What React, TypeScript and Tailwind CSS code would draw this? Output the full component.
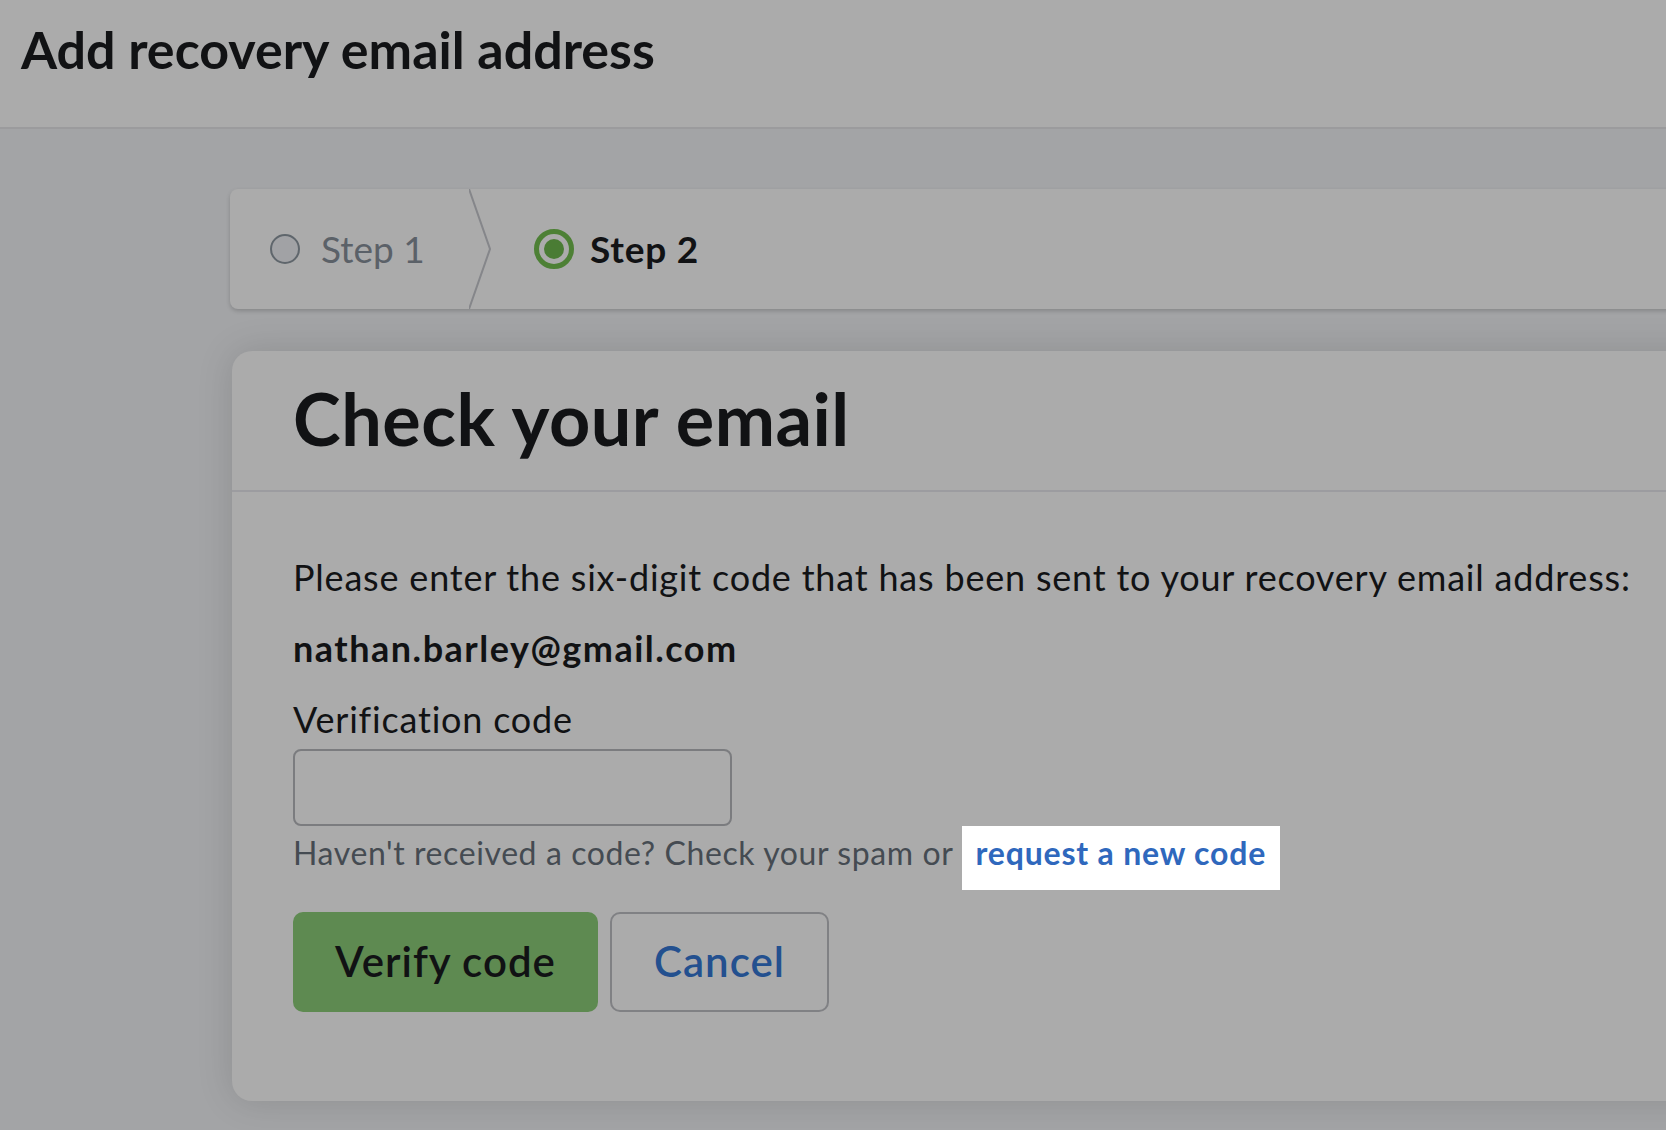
import React from "react";

export default function App() {
  return (
    <div className="min-h-screen w-full overflow-hidden bg-[#a3a4a6] font-['Lato',sans-serif] text-[#111214]">
      {/* Page header */}
      <header className="h-[129px] border-b-2 border-[#9b9b9d] bg-[#ababab] pl-[21px] pt-[18px]">
        <h1 className="text-[52px] font-bold leading-[1.2]">Add recovery email address</h1>
      </header>

      <div className="w-[1900px] pl-[230px]">
        {/* Stepper */}
        <div className="mt-[60px] flex h-[120px] items-stretch rounded-l-[8px] bg-[#ababab] shadow-[0_2px_4px_rgba(0,0,0,0.18)]">
          <div className="flex w-[239px] items-center gap-[21px] pl-[40px]">
            <span className="h-[30px] w-[30px] rounded-full border-2 border-[#5f666c] bg-[#a1a2a5]" />
            <span className="text-[37px] leading-[1.2] text-[#5b6168]">Step 1</span>
          </div>
          <svg width="22" height="120" viewBox="0 0 22 120" className="shrink-0">
            <polyline points="0,0 21,60 0,120" fill="none" stroke="#85868a" strokeWidth="2" />
          </svg>
          <div className="flex items-center gap-[16px] pl-[43px]">
            <span className="flex h-[40px] w-[40px] items-center justify-center rounded-full border-[5px] border-[#4d8035]">
              <span className="h-[20px] w-[20px] rounded-full bg-[#4a7c34]" />
            </span>
            <span className="text-[37px] font-bold leading-[1.2] tracking-[0.8px]">Step 2</span>
          </div>
        </div>

        {/* Card */}
        <div className="ml-[2px] mt-[42px] h-[750px] rounded-l-[20px] bg-[#ababab] shadow-[0_0_36px_rgba(0,0,0,0.13)]">
          <div className="h-[141px] border-b-2 border-[#9c9ca0] pl-[61px] pt-[24px]">
            <h2 className="text-[72px] font-bold leading-[1.2] tracking-[0.5px]">Check your email</h2>
          </div>

          <div className="pl-[61px] pt-[64px]">
            <p className="whitespace-nowrap text-[36px] leading-[1.2] tracking-[0.8px]">
              Please enter the six-digit code that has been sent to your recovery email address:
            </p>
            <p className="mt-[28px] text-[36px] font-bold leading-[1.2] tracking-[1.5px]">nathan.barley@gmail.com</p>

            <label className="mt-[28px] block text-[36px] leading-[1.2] tracking-[0.8px]">Verification code</label>
            <input
              type="text"
              className="mt-[7px] block h-[77px] w-[439px] rounded-[8px] border-2 border-[#7b7c7f] bg-transparent outline-none"
            />

            <div className="flex items-baseline whitespace-nowrap">
              <span className="text-[32px] leading-[1.2] tracking-[0.6px] text-[#454b52]">
                Haven't received a code? Check your spam or
              </span>
              <a className="ml-[8px] inline-block bg-white px-[14px] pb-[18px] pt-[8px] text-[32px] font-bold leading-[1.2] tracking-[0.8px] text-[#2f68bd]">
                request a new code
              </a>
            </div>

            <div className="mt-[22px] flex gap-[12px]">
              <button className="h-[100px] w-[305px] rounded-[10px] bg-[#5e8a51] text-[42px] font-semibold tracking-[1px]">
                Verify code
              </button>
              <button className="h-[100px] w-[219px] rounded-[10px] border-2 border-[#808184] text-[42px] font-semibold tracking-[1px] text-[#23508f]">
                Cancel
              </button>
            </div>
          </div>
        </div>
      </div>
    </div>
  );
}
